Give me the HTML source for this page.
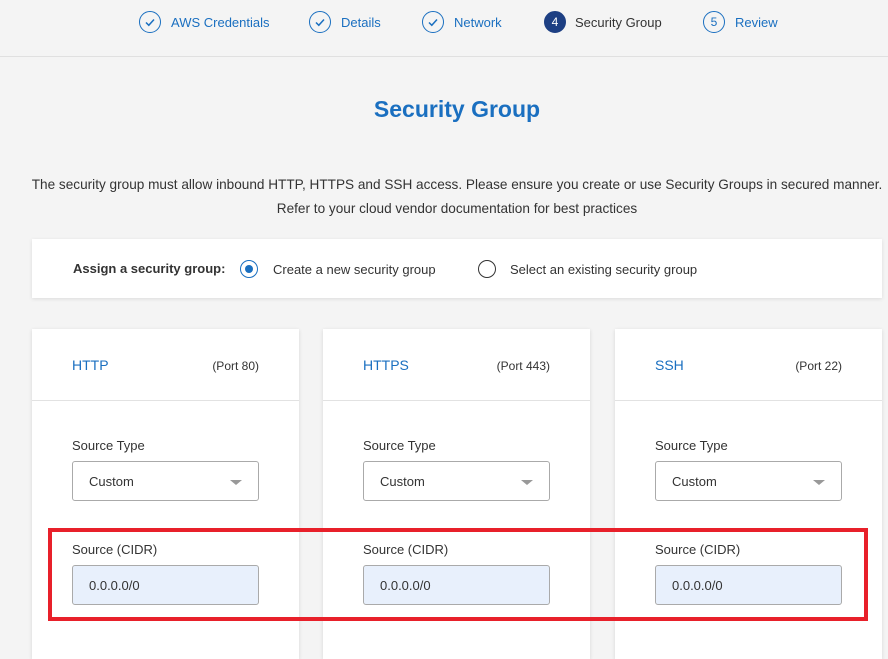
<!DOCTYPE html>
<html><head><meta charset="utf-8"><style>
*{margin:0;padding:0;box-sizing:border-box}
body{width:888px;height:644px;overflow:hidden;background:#f4f4f4;font-family:"Liberation Sans",sans-serif;color:#333;position:relative}
.a{position:absolute;white-space:nowrap}
.top{position:absolute;left:0;top:0;width:888px;height:57px;border-bottom:1px solid #e0e0e0;background:#f4f4f4}
.step{position:absolute;top:11px;height:22px;display:flex;align-items:center;font-size:13px;color:#1a6fc0}
.circ{width:22px;height:22px;border:1.5px solid #1a6fc0;border-radius:50%;margin-right:10px;display:flex;align-items:center;justify-content:center;font-size:12px}
.card{position:absolute;top:329px;width:267px;height:330px;background:#fff;box-shadow:0 1px 4px rgba(0,0,0,.12)}
.card .hd{height:72px;border-bottom:1px solid #e2e2e2;position:relative}
.card .t{position:absolute;left:40px;top:28px;font-size:14px;color:#1a6fc0}
.card .p{position:absolute;right:40px;top:30px;font-size:12px;color:#333}
.lbl{position:absolute;left:40px;font-size:13px;color:#333}
.sel{position:absolute;left:40px;top:132px;width:187px;height:40px;border:1px solid #aaa;border-radius:3px;font-size:13px;padding:12px 16px}
.sel:after{content:"";position:absolute;right:16px;top:18px;border-left:6px solid transparent;border-right:6px solid transparent;border-top:5px solid #999}
.inp{position:absolute;left:40px;top:236px;width:187px;height:40px;border:1px solid #aaa;border-radius:3px;background:#e8f0fc;font-size:13px;padding:12px 16px}
</style></head><body>
<div class="top">
<div class="step" style="left:139px"><div class="circ"><svg width="12" height="12" viewBox="0 0 12 12"><path d="M2 6.5l2.8 2.8L10 3.5" fill="none" stroke="#1a6fc0" stroke-width="1.5"/></svg></div>AWS Credentials</div>
<div class="step" style="left:309px"><div class="circ"><svg width="12" height="12" viewBox="0 0 12 12"><path d="M2 6.5l2.8 2.8L10 3.5" fill="none" stroke="#1a6fc0" stroke-width="1.5"/></svg></div>Details</div>
<div class="step" style="left:422px"><div class="circ"><svg width="12" height="12" viewBox="0 0 12 12"><path d="M2 6.5l2.8 2.8L10 3.5" fill="none" stroke="#1a6fc0" stroke-width="1.5"/></svg></div>Network</div>
<div class="step" style="left:544px;color:#333"><div class="circ" style="background:#1d3f83;border-color:#1d3f83;color:#fff;margin-right:9px">4</div>Security Group</div>
<div class="step" style="left:703px"><div class="circ" style="color:#1a6fc0">5</div>Review</div>
</div>
<div class="a" style="left:0;width:914px;text-align:center;top:96px;font-size:23px;font-weight:bold;color:#1a6fc0">Security Group</div>
<div class="a" style="left:0;width:914px;text-align:center;top:173px;font-size:13.6px;line-height:24px;color:#333">The security group must allow inbound HTTP, HTTPS and SSH access. Please ensure you create or use Security Groups in secured manner.<br>Refer to your cloud vendor documentation for best practices</div>
<div class="a" style="left:32px;top:239px;width:850px;height:59px;background:#fff;box-shadow:0 1px 4px rgba(0,0,0,.1)">
<div class="a" style="left:41px;top:22px;font-size:13px;font-weight:bold;color:#333">Assign a security group:</div>
<div class="a" style="left:208px;top:21px;width:18px;height:18px;border:1.5px solid #1a6fc0;border-radius:50%"><div style="position:absolute;left:3.5px;top:3.5px;width:8px;height:8px;border-radius:50%;background:#1a6fc0"></div></div>
<div class="a" style="left:241px;top:23px;font-size:13px">Create a new security group</div>
<div class="a" style="left:446px;top:21px;width:18px;height:18px;border:1.5px solid #333;border-radius:50%"></div>
<div class="a" style="left:478px;top:23px;font-size:13px">Select an existing security group</div>
</div>
<div class="card" style="left:32px"><div class="hd"><span class="t">HTTP</span><span class="p">(Port 80)</span></div><div class="lbl" style="top:109px">Source Type</div><div class="sel">Custom</div><div class="lbl" style="top:213px">Source (CIDR)</div><div class="inp">0.0.0.0/0</div></div>
<div class="card" style="left:323px"><div class="hd"><span class="t">HTTPS</span><span class="p">(Port 443)</span></div><div class="lbl" style="top:109px">Source Type</div><div class="sel">Custom</div><div class="lbl" style="top:213px">Source (CIDR)</div><div class="inp">0.0.0.0/0</div></div>
<div class="card" style="left:615px"><div class="hd"><span class="t">SSH</span><span class="p">(Port 22)</span></div><div class="lbl" style="top:109px">Source Type</div><div class="sel">Custom</div><div class="lbl" style="top:213px">Source (CIDR)</div><div class="inp">0.0.0.0/0</div></div>
<div class="a" style="left:48px;top:528px;width:820px;height:93px;border:4px solid #e8202a"></div>
</body></html>
